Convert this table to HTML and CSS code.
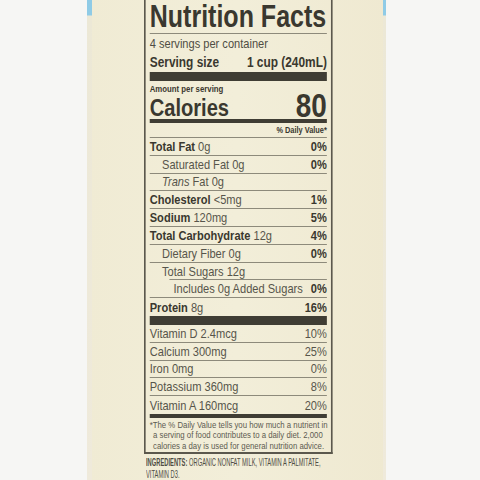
FILE: index.html
```html
<!DOCTYPE html>
<html lang="en">
<head>
  <meta charset="UTF-8">
  <meta name="viewport" content="width=device-width, initial-scale=1.0">
  <title>Nutrition Facts</title>
  <link rel="stylesheet" href="styles.css">
</head>
<body>
<div class="carton">
  <div class="edge edge-left"></div>
  <div class="panel">
    <div class="label">
      <h1 class="title">Nutrition Facts</h1>
      <div class="servings">4 servings per container</div>
      <div class="row serving-size">
        <span>Serving size</span>
        <span>1 cup (240mL)</span>
      </div>
      <div class="bar bar-thick"></div>
      <div class="amount">Amount per serving</div>
      <div class="row calories">
        <span>Calories</span>
        <span class="cal-value">80</span>
      </div>
      <div class="bar bar-mid"></div>
      <div class="dv-head">% Daily Value*</div>

      <div class="row nutrient"><span><b>Total Fat</b> 0g</span><b>0%</b></div>
      <div class="row nutrient indent1"><span>Saturated Fat 0g</span><b>0%</b></div>
      <div class="row nutrient indent1"><span><i>Trans</i> Fat 0g</span></div>
      <div class="row nutrient"><span><b>Cholesterol</b> &lt;5mg</span><b>1%</b></div>
      <div class="row nutrient"><span><b>Sodium</b> 120mg</span><b>5%</b></div>
      <div class="row nutrient"><span><b>Total Carbohydrate</b> 12g</span><b>4%</b></div>
      <div class="row nutrient indent1"><span>Dietary Fiber 0g</span><b>0%</b></div>
      <div class="row nutrient indent1 short-rule"><span>Total Sugars 12g</span></div>
      <div class="row nutrient indent2"><span>Includes 0g Added Sugars</span><b>0%</b></div>
      <div class="row nutrient last"><span><b>Protein</b> 8g</span><b>16%</b></div>
      <div class="bar bar-thick"></div>

      <div class="row vitamin"><span>Vitamin D 2.4mcg</span><span>10%</span></div>
      <div class="row vitamin"><span>Calcium 300mg</span><span>25%</span></div>
      <div class="row vitamin"><span>Iron 0mg</span><span>0%</span></div>
      <div class="row vitamin"><span>Potassium 360mg</span><span>8%</span></div>
      <div class="row vitamin last"><span>Vitamin A 160mcg</span><span>20%</span></div>
      <div class="bar bar-mid"></div>

      <p class="footnote">*The % Daily Value tells you how much a nutrient in<br>a serving of food contributes to a daily diet. 2,000<br>calories a day is used for general nutrition advice.</p>
    </div>
    <p class="ingredients"><b>INGREDIENTS:</b> ORGANIC NONFAT MILK, VITAMIN A PALMITATE,<br>VITAMIN D3.</p>
  </div>
  <div class="edge edge-right"></div>
</div>
</body>
</html>
```

FILE: styles.css
```css
body {
  margin: 0;
  background-color: #f6f6f4;
  font-family: "Liberation Sans", Arial, sans-serif;
  color: #3a382f;
}
.carton {
  display: flex;
  margin-left: 87px;
  width: 299px;
  height: 480px;
  background: linear-gradient(to right, #f0ebd4 0%, #f2eed9 50%, #efe9d1 100%);
  overflow: hidden;
}
.edge {
  flex-shrink: 0;
  width: 5px;
  background: linear-gradient(to bottom, #8fcbe6 0, #8fcbe6 15px, #ece8d6 16px, #efeadb 100%);
}
.edge-right {
  width: 3px;
}
.panel {
  flex: 1;
  min-width: 0;
  padding-left: 52px;
}

/* the label type is condensed; no narrow face installed, so squeeze it */
.label {
  box-sizing: border-box;
  width: 230px;
  padding: 0 5px;
  border: 2px solid #5b584d;
  border-top: none;
  transform: scaleX(0.82);
  transform-origin: 0 0;
}
.title {
  margin: 0;
  height: 33px;
  font-size: 30.5px;
  line-height: 32px;
  font-weight: bold;
  border-bottom: 1px solid #8d8a7b;
  white-space: nowrap;
}
.servings {
  height: 18px;
  font-size: 13.5px;
  line-height: 20px;
  color: #4f4d44;
}
.row {
  display: flex;
  justify-content: space-between;
  align-items: center;
  white-space: nowrap;
}
.serving-size {
  height: 20px;
  font-size: 14.5px;
  font-weight: bold;
}
.bar {
  background-color: #3f3d34;
}
.bar-thick {
  height: 9px;
}
.bar-mid {
  height: 4px;
}
.amount {
  height: 12px;
  margin-top: 2px;
  font-size: 9.5px;
  line-height: 12px;
  font-weight: bold;
}
.calories {
  height: 24px;
  align-items: flex-end;
  font-size: 24.5px;
  font-weight: bold;
  line-height: 22px;
}
.cal-value {
  font-size: 34px;
  line-height: 27px;
}
.dv-head {
  height: 14px;
  font-size: 9px;
  line-height: 15px;
  font-weight: bold;
  text-align: right;
  border-bottom: 1px solid #8d8a7b;
}
.nutrient,
.vitamin {
  box-sizing: border-box;
  height: 17.8px;
  font-size: 13.5px;
  border-bottom: 1px solid #8d8a7b;
}
.nutrient span {
  color: #57554b;
}
.nutrient b {
  color: #3a382f;
}
.vitamin {
  color: #57554b;
}
.indent1 {
  padding-left: 15px;
}
.indent2 {
  padding-left: 29px;
}
.short-rule {
  border-bottom: none;
  background: linear-gradient(#8d8a7b, #8d8a7b) no-repeat 24px 100% / calc(100% - 24px) 1px;
}
.last {
  border-bottom: none;
}
.footnote {
  margin: 2px 0 1px;
  font-size: 9.5px;
  line-height: 10.5px;
  color: #5d5b51;
  padding-left: 4px;
  text-indent: -4px;
  white-space: nowrap;
}
.ingredients {
  margin: 2px 0 0 2px;
  font-size: 10.5px;
  line-height: 12px;
  color: #4f4d44;
  white-space: nowrap;
  transform: scaleX(0.55);
  transform-origin: 0 0;
}
```
